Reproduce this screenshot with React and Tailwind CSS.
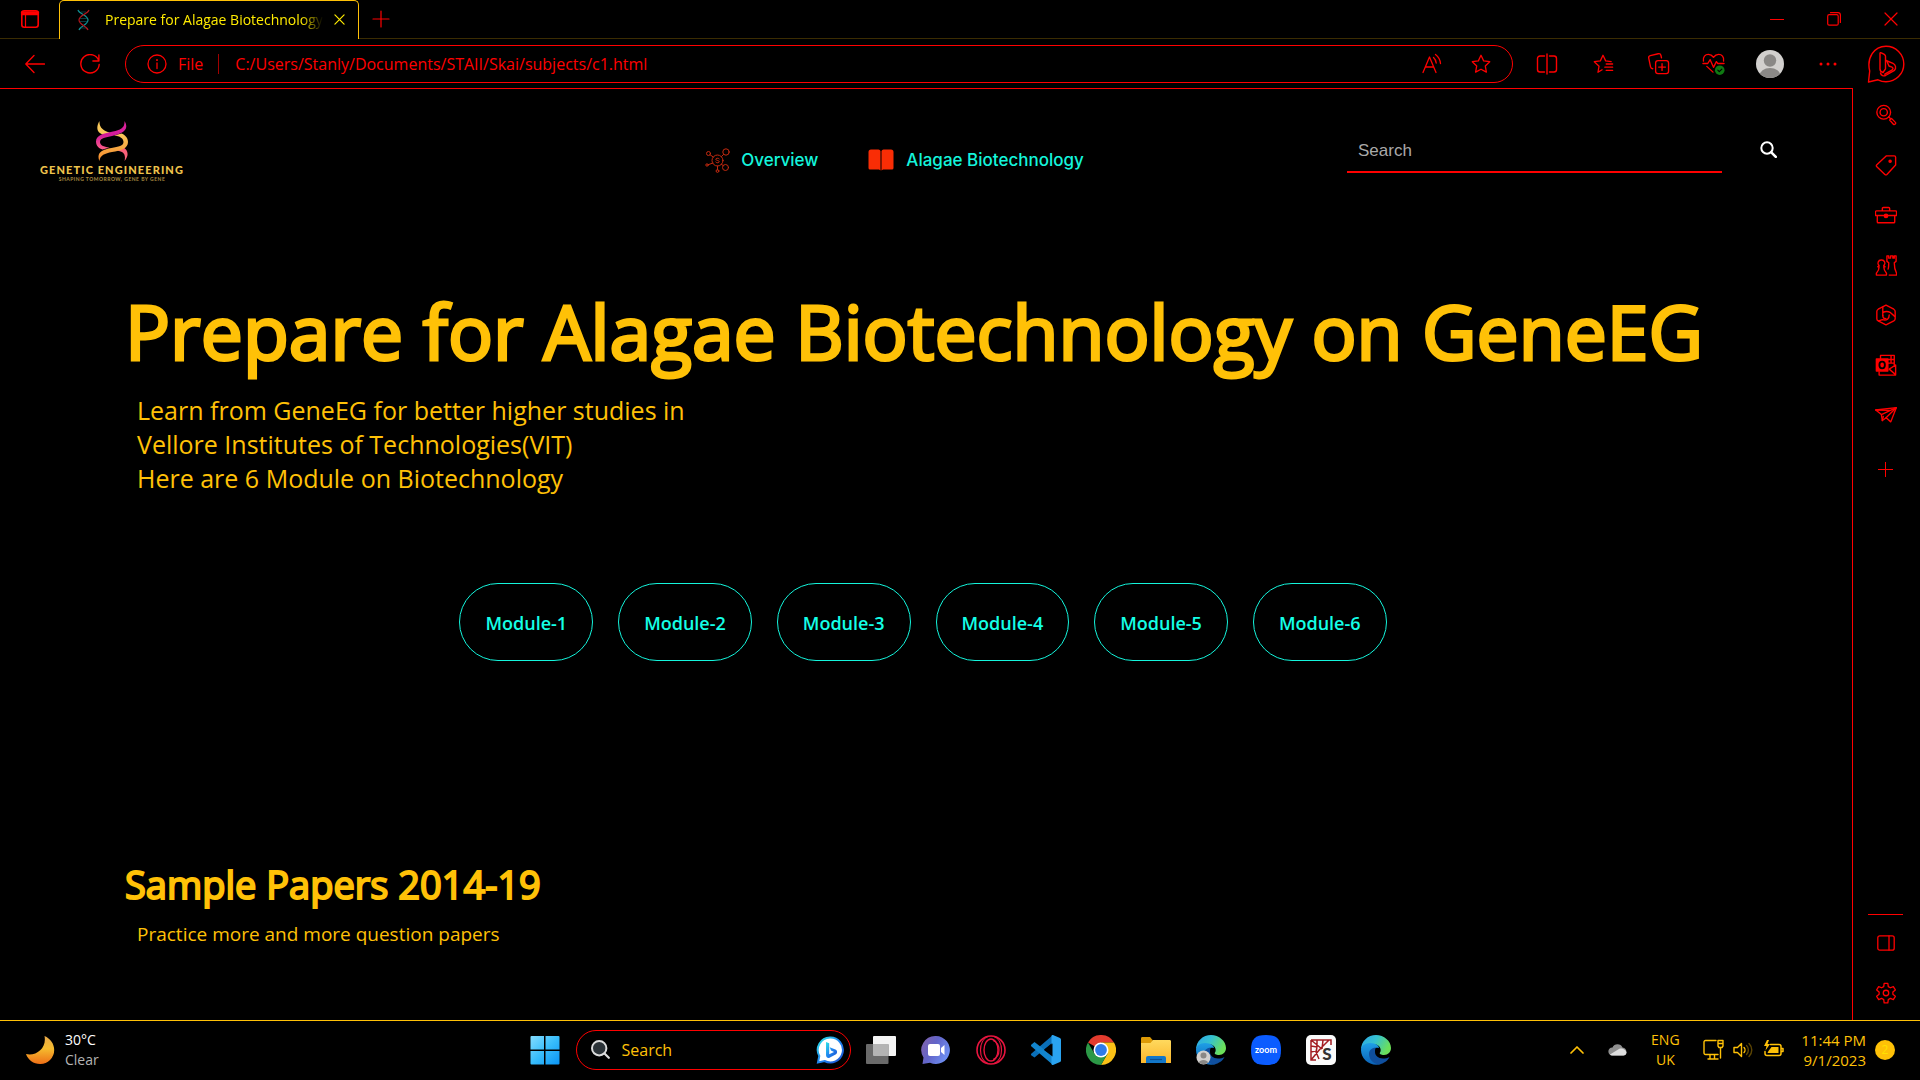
import React from "react";

function Line({ size = 20, box = 24, sw = 1.4, className = "", children }) {
  return (
    <svg
      width={size}
      height={size}
      viewBox={`0 0 ${box} ${box}`}
      fill="none"
      stroke="currentColor"
      strokeWidth={sw}
      strokeLinecap="round"
      strokeLinejoin="round"
      className={`shrink-0 ${className}`}
      aria-hidden="true"
    >
      {children}
    </svg>
  );
}

function IconButton({ label, className = "", children }) {
  return (
    <button type="button" aria-label={label} className={`flex shrink-0 items-center justify-center ${className}`}>
      {children}
    </button>
  );
}

/* ---------- window tab strip ---------- */

function TabStrip() {
  return (
    <div className="flex h-[39px] items-stretch">
      <div className="flex w-[59px] items-center border-b border-[#3b2c02] pl-[20px]">
        <IconButton label="Workspaces" className="h-[20px] w-[20px]">
          <Line size={20} box={20} sw={1.6}>
            <rect x="1.8" y="1.8" width="16.4" height="16.4" rx="2.5" />
            <path d="M2 3.5h16M2 5h16" strokeWidth="2.4" />
            <path d="M5.5 6v12" strokeWidth="1.2" />
          </Line>
        </IconButton>
      </div>
      <div className="flex w-[300px] items-center rounded-t-[5px] border border-b-0 border-[#ffc107] pr-[11px] pb-[1px] pl-[17px] text-[#ffeb00]">
        <svg width="13" height="22" viewBox="0 0 13 22" fill="none" strokeWidth="1.2" className="shrink-0" aria-hidden="true">
          <path d="M1 1c1 4 10 5 10 10S3 17 2 21" stroke="#0f8f93" />
          <path d="M12 1c-1 4-10 5-10 10s8 6 9 10" stroke="#b3161d" />
          <path d="M4 3h5M4 19h5M3 9.500h7M3 12.500h7" stroke="#0f5f66" strokeWidth="0.600" />
        </svg>
        <span className="ml-[15px] flex-1 overflow-hidden [mask-image:linear-gradient(to_right,black_90%,transparent)] text-[14px] whitespace-nowrap">
          Prepare for Alagae Biotechnology
        </span>
        <IconButton label="Close tab" className="ml-[8px] h-[16px] w-[16px]">
          <Line size={11} box={12} sw={1.3}>
            <path d="M1 1l10 10M11 1L1 11" />
          </Line>
        </IconButton>
      </div>
      <div className="flex flex-1 items-center justify-between border-b border-[#3b2c02] pr-[21px] pl-[12px]">
        <IconButton label="New tab" className="h-[20px] w-[20px]">
          <Line size={18} box={18} sw={1.2}>
            <path d="M9 1v16M1 9h16" />
          </Line>
        </IconButton>
        <div className="flex items-center gap-[41px]">
          <IconButton label="Minimise" className="h-[16px] w-[16px]">
            <Line size={14} box={14} sw={1}>
              <path d="M0 7.500h14" />
            </Line>
          </IconButton>
          <IconButton label="Restore" className="h-[16px] w-[16px]">
            <Line size={14} box={14} sw={1.200}>
              <rect x="0.700" y="2.700" width="10.500" height="10.500" rx="1.500" />
              <path d="M3.500 0.700h7.500a2.500 2.500 0 0 1 2.400 2.400V10.500" />
            </Line>
          </IconButton>
          <IconButton label="Close" className="h-[16px] w-[16px]">
            <Line size={14} box={14} sw={1.200}>
              <path d="M1 1l12 12M13 1L1 13" />
            </Line>
          </IconButton>
        </div>
      </div>
    </div>
  );
}

/* ---------- address bar row ---------- */

const STAR = "M12 2.500l2.900 6.100 6.600.9-4.800 4.700 1.200 6.700L12 17.700l-5.900 3.200 1.200-6.700L2.500 9.500l6.600-.9z";

function Toolbar() {
  return (
    <div className="flex h-[49px] items-center pr-[15px] pl-[25px]">
      <IconButton label="Back" className="h-[24px] w-[20px]">
        <Line size={20} box={20} sw={1.300}>
          <path d="M19.500 10H1M9 1.500L.8 10 9 18.500" />
        </Line>
      </IconButton>
      <IconButton label="Refresh" className="ml-[35px] h-[24px] w-[20px]">
        <Line size={20} box={20} sw={1.400}>
          <path d="M18.800 7A9.200 9.200 0 1 0 19.200 10.500M18.900 1v6h-6" />
        </Line>
      </IconButton>
      <div className="ml-[25px] flex h-[38px] flex-1 items-center rounded-full border border-[#ff0000] pr-[20px] pl-[21px]">
        <Line size={20} box={20} sw={1.300}>
          <circle cx="10" cy="10" r="9" />
          <path d="M10 9v5.500" />
          <path d="M10 6v.2" strokeWidth="1.800" />
        </Line>
        <span className="ml-[11px] text-[16px]">File</span>
        <span className="mr-[16px] ml-[15px] h-[20px] w-px shrink-0 bg-[#a00000]" />
        <input
          aria-label="Address"
          defaultValue="C:/Users/Stanly/Documents/STAII/Skai/subjects/c1.html"
          className="min-w-0 flex-1 bg-transparent text-[16px] outline-none"
        />
        <IconButton label="Read aloud" className="h-[22px] w-[22px]">
          <Line size={22} box={22} sw={1.300}>
            <path d="M2 19.500L8.500 4 15 19.500M4.300 14h8.400" />
            <path d="M12.500 4.500c1.600 1.500 2.500 3.500 2.700 5.500M14.500 1.500c3 2.300 4.700 5.500 5 9" />
          </Line>
        </IconButton>
        <IconButton label="Add to favourites" className="ml-[27px] h-[22px] w-[22px]">
          <Line size={22} sw={1.400}>
            <path d={STAR} />
          </Line>
        </IconButton>
      </div>
      <IconButton label="Split screen" className="ml-[23px] h-[22px] w-[22px]">
        <Line size={22} box={22} sw={1.400}>
          <path d="M8.500 3H4a2.500 2.500 0 0 0-2.500 2.500v11A2.500 2.500 0 0 0 4 19h4.500M13.500 3H18a2.500 2.500 0 0 1 2.500 2.500v11A2.500 2.500 0 0 1 18 19h-4.500M11 1v20" />
        </Line>
      </IconButton>
      <IconButton label="Favourites" className="ml-[34px] h-[22px] w-[22px]">
        <Line size={22} sw={1.400}>
          <path d="M11 18.300l-4.500 2.700 1.200-6.600L2.500 9.500l6.600-.9L12 2.500l2.900 6.100 6 .8" />
          <path d="M15.500 12h7M14 15.500h8.500M15.500 19h7" />
        </Line>
      </IconButton>
      <IconButton label="Collections" className="ml-[33px] h-[24px] w-[22px]">
        <Line size={23} sw={1.400}>
          <rect x="9" y="9" width="13.500" height="13.500" rx="2.500" />
          <path d="M15.700 12.200v7M12.200 15.700h7M6 17.500c-1.300-.2-2-.8-2.300-2L1.800 6.300C1.500 5 2.300 4 3.500 3.700l8.200-1.900c1.300-.3 2.500.4 2.800 1.600l.6 2.600" />
        </Line>
      </IconButton>
      <IconButton label="Browser essentials" className="ml-[33px] h-[24px] w-[22px]">
        <Line size={23} sw={1.400}>
          <path d="M1.500 9.500C.7 5 3.500 2.500 6.600 2.500c2.200 0 4 1.100 5.400 3 1.400-1.900 3.200-3 5.400-3 3.100 0 5.900 2.500 5.100 7M5 15l6.500 6" />
          <path d="M1 12h5l2.500-4 3.500 8 3-6 1.500 2H23" />
          <circle cx="18.500" cy="19" r="5" fill="#0f7a12" stroke="none" />
          <path d="M16.500 19l1.500 1.500 2.700-2.700" stroke="#000" strokeWidth="1.200" />
        </Line>
      </IconButton>
      <IconButton label="Profile" className="ml-[32px] h-[28px] w-[28px]">
        <svg width="28" height="28" viewBox="0 0 28 28" aria-hidden="true">
          <defs>
            <clipPath id="avatar">
              <circle cx="14" cy="14" r="14" />
            </clipPath>
          </defs>
          <g clipPath="url(#avatar)">
            <rect width="28" height="28" fill="#d2d0ce" />
            <circle cx="14" cy="10.500" r="6.200" fill="#8a8886" />
            <ellipse cx="14" cy="26" rx="10.500" ry="8" fill="#8a8886" />
          </g>
        </svg>
      </IconButton>
      <IconButton label="Settings and more" className="ml-[34px] h-[20px] w-[20px]">
        <svg width="18" height="4" viewBox="0 0 18 4" fill="currentColor" aria-hidden="true">
          <circle cx="2" cy="2" r="1.500" />
          <circle cx="9" cy="2" r="1.500" />
          <circle cx="16" cy="2" r="1.500" />
        </svg>
      </IconButton>
      <IconButton label="Bing chat" className="ml-[29px] h-[38px] w-[38px]">
        <Line size={38} box={38} sw={1.400}>
          <path d="M1.500 37l1.200-11C-.5 13 7 1.200 19 1.200A17.800 17.800 0 0 1 19 36.800c-3 0-5.500-.7-8-2z" />
          <path d="M13 8.500c0-.8.7-1 1.300-.7l3 1.500c.8.500 1.200 1 1.200 2v12.500l-2.500 3.700c-2-.5-3-1.700-3-3.500z" />
          <path d="M19 15.500l7 2.800c2.600 1.200 3.500 4.700 1.500 7l-9 5.200c-1.600.8-4.500.2-5-2.500M20 16.500l2 4.500 3 1.200c1.500.7 1.200 2-.2 3l-7 4" />
        </Line>
      </IconButton>
    </div>
  );
}

/* ---------- sidebar ---------- */

const SIDE_ITEMS = [
  {
    label: "Search",
    art: (
      <>
        <circle cx="9.500" cy="9" r="7.500" />
        <circle cx="9.500" cy="9" r="4" />
        <path d="M15 14l1.500 1.500M16 17.500l2-1.800 4.500 4.600c.6.800-1 2.800-2.200 2z" />
      </>
    ),
  },
  {
    label: "Shopping",
    art: (
      <>
        <path d="M12.500 2H21a1.500 1.500 0 0 1 1.500 1.500V12L13 22.300c-.7.700-1.500.7-2.200 0L2 14c-.7-.8-.7-1.600 0-2.300z" />
        <circle cx="16.500" cy="8" r="1.200" fill="currentColor" />
      </>
    ),
  },
  {
    label: "Tools",
    art: (
      <>
        <path d="M1.500 7.500h21c.6 0 1 .4 1 1v4h-23v-4c0-.6.400-1 1-1zM2.500 12.500v7c0 .6.400 1 1 1h17c.6 0 1-.4 1-1v-7M8 7.500V5c0-.8.400-1.200 1.200-1.200h5.600c.8 0 1.200.4 1.200 1.200v2.500" />
        <circle cx="12" cy="13" r="1.800" fill="currentColor" />
      </>
    ),
  },
  {
    label: "Games",
    art: (
      <>
        <path d="M7 6.500a3.500 3.500 0 0 1 2.500 6.200L11 14H9.500c0 3 1 4.500 3 7v2H1.500v-2c2.500-2.500 3-4 3-7H3l1.500-1.300A3.500 3.500 0 0 1 7 6.500z" />
        <path d="M13 2h2v2.500h2V2h2.500v2.500H21V2h2v6l-2 1.500c0 5 .5 7.500 2.500 11.500v2h-8M13 2v6l2 1.500c0 3 0 5-.7 7" />
      </>
    ),
  },
  {
    label: "Microsoft 365",
    art: (
      <>
        <path d="M12 1.200l8.500 4.500c1 .6 1.500 1.300 1.500 2.400v8c0 1-.5 1.800-1.500 2.400L12 22.800l-8.500-4.300C2.500 18 2 17.200 2 16.100v-8c0-1 .5-1.800 1.500-2.400z" />
        <path d="M8.500 3.500v9M8.500 9.500c3-2 6-1.500 8.500 0l4.500 4M4 18.500l4-1.500c5 1.500 7.500-1 7.500-5" />
        <path d="M8.500 12.500c0 2 1.500 3.500 3.500 3.500" />
      </>
    ),
  },
  {
    label: "Outlook",
    art: (
      <>
        <path d="M6 5V1.500h15V12M4.500 19.500V23H22.500V12l-7 4.500 7 6M14 6h7M14 10h7M17.500 2v8" />
        <rect x="1.500" y="5.500" width="12.500" height="13" fill="currentColor" />
        <ellipse cx="7.800" cy="12" rx="3" ry="3.600" stroke="#000" strokeWidth="2" />
      </>
    ),
  },
  {
    label: "Drop",
    art: (
      <>
        <path d="M.8 6.500L23.200 4l-6 15.500-5-4.500L8 18l-1-6.500z" />
        <path d="M7 11.500L23.200 4 12 15M8 18l1-4.500M.8 6.500L16 7" />
      </>
    ),
  },
];

function Sidebar() {
  return (
    <aside className="flex w-[67px] shrink-0 flex-col items-center pt-[15px] pr-[2px] pb-[15px]">
      {SIDE_ITEMS.map((item) => (
        <IconButton key={item.label} label={item.label} className="mb-[26px] h-[24px] w-[24px]">
          <Line size={22} sw={1.500}>{item.art}</Line>
        </IconButton>
      ))}
      <IconButton label="Customise" className="mt-[4px] h-[24px] w-[24px]">
        <Line size={15} box={15} sw={1}>
          <path d="M7.500 0v15M0 7.500h15" />
        </Line>
      </IconButton>
      <div className="mt-auto h-px w-[35px] bg-[#ff0000]" />
      <IconButton label="Hide sidebar" className="mt-[16px] h-[24px] w-[24px]">
        <Line size={18} box={18} sw={1.300}>
          <rect x="0.800" y="1.800" width="16.400" height="14.400" rx="2" />
          <path d="M12 2v14" />
        </Line>
      </IconButton>
      <IconButton label="Settings" className="mt-[26px] h-[24px] w-[24px]">
        <Line size={22} sw={1.400}>
          <path d="M9.500 5l.5-3.500h4l.5 3.500 2.300 1.300L20 5l2.200 3.600-2.700 2.200v2.600l2.700 2.200L20 19.200l-3.200-1.400-2.300 1.400-.5 3.500h-4l-.5-3.500-2.300-1.400L4 19.200l-2.200-3.600 2.700-2.200v-2.600L1.800 8.600 4 5l3.200 1.300z" />
          <circle cx="12" cy="12" r="3" />
        </Line>
      </IconButton>
    </aside>
  );
}

/* ---------- page ---------- */

function Logo() {
  return (
    <a href="#home" aria-label="Genetic Engineering home" className="flex w-[150px] flex-col items-center text-[#eec34c]">
      <svg width="32" height="40" viewBox="0 0 32 40" aria-hidden="true">
        <defs>
          <linearGradient id="dnaGold" x1="0" y1="0" x2="0" y2="1">
            <stop offset="0" stopColor="#f9c85a" />
            <stop offset="1" stopColor="#f58a2c" />
          </linearGradient>
          <linearGradient id="dnaPink" x1="0" y1="0" x2="0" y2="1">
            <stop offset="0" stopColor="#e0259c" />
            <stop offset="0.500" stopColor="#d21b9a" />
            <stop offset="1" stopColor="#ff5f86" />
          </linearGradient>
        </defs>
        <path d="M21 30c7 0 9 4 7.500 10 5-6 3.500-11-1.500-14z" fill="#f8607a" />
        <path d="M3.500 0C-.5 7 1 12 8 14l6-2.500C8 10 3 7 3.500 0z" fill="#f9c85a" />
        <path d="M18 14.500c6 .5 9.500 3 9.500 6.500 0 4-5 4.500-12 6C7 28.500 0 31 3.500 40 4 34 9 32.500 16 31c9-1.500 16-3.500 16-10 0-4.500-3-7-6.500-8.500z" fill="url(#dnaGold)" />
        <path d="M28.500 0c.5 7-4 9-11.500 10.500C8 12.500 0 14 0 20.500c0 4.500 3 7 6.500 8l7-2c-6-.5-9.500-2.500-9.500-5.500 0-4 6-4.500 12-6C26 13 34 9 28.500 0z" fill="url(#dnaPink)" />
      </svg>
      <span className="mt-[3px] font-['Lato'] text-[11px] leading-[12px] font-black tracking-widest whitespace-nowrap">GENETIC ENGINEERING</span>
      <span className="font-['Lato'] text-[5px] leading-[6px] font-bold tracking-widest whitespace-nowrap text-[#a98c40]">SHAPING TOMORROW, GENE BY GENE</span>
    </a>
  );
}

function PageHeader() {
  return (
    <header className="grid grid-cols-[1fr_auto_1fr] items-start pt-[32px] pr-[60px] pl-[37px]">
      <Logo />
      <nav className="-ml-[40px] flex items-center gap-[50px] pt-[26px] font-['Inter'] text-[17px] leading-[26px] font-medium text-[#14f5dc]">
        <a href="#overview" className="flex items-center gap-[11px]">
          <Line size={25} box={25} sw={1} className="text-[#c42a10]">
            <circle cx="12.500" cy="12.500" r="5.500" />
            <path d="M14.200 10.800c-.8-1-3.400-.8-3.400.5 0 1.500 3.400.8 3.400 2.400 0 1.300-2.600 1.500-3.400.4" />
            <circle cx="21" cy="4" r="3.200" />
            <circle cx="3.500" cy="5.500" r="2" />
            <circle cx="20.500" cy="19.500" r="3" />
            <circle cx="12.500" cy="23" r="1.400" />
            <circle cx="2" cy="17" r="1.200" />
            <path d="M16.500 8.500l2-2M8.300 9L5 6.800M16.500 16.500l1.800 1M12.500 18v4M8 15l-4.800 1.700" />
          </Line>
          Overview
        </a>
        <a href="#alagae" className="flex items-center gap-[12px]">
          <svg width="26" height="22" viewBox="0 0 26 22" fill="#f92d05" className="shrink-0" aria-hidden="true">
            <path d="M3 .5h7.500A2.200 2.200 0 0 1 12.500 2v19.500L11 20.500H2A1.500 1.500 0 0 1 .5 19V3A2.500 2.500 0 0 1 3 .5zM23 .5h-7.500A2.200 2.200 0 0 0 13.500 2v19.500l1.500-1h9a1.500 1.500 0 0 0 1.500-1.500V3A2.500 2.500 0 0 0 23 .5z" />
          </svg>
          Alagae Biotechnology
        </a>
      </nav>
      <form className="flex items-center justify-end pt-[6px]" onSubmit={(e) => e.preventDefault()}>
        <input
          aria-label="Search"
          placeholder="Search"
          className="h-[46px] w-full max-w-[375px] border-b-2 border-[#ff0000] bg-transparent pt-[4px] pr-[11px] pl-[11px] font-['Liberation_Sans'] text-[17px] text-white outline-none placeholder:text-[#a9a9a9]"
        />
        <IconButton label="Submit search" className="mr-[15px] mb-[2px] ml-[37px] h-[18px] w-[18px] text-white">
          <Line size={17} box={17} sw={2}>
            <circle cx="7" cy="7" r="5.700" />
            <path d="M11.300 11.300l4.500 4.500" strokeWidth="2.600" />
          </Line>
        </IconButton>
      </form>
    </header>
  );
}

const MODULES = ["Module-1", "Module-2", "Module-3", "Module-4", "Module-5", "Module-6"];

function Page() {
  return (
    <main className="min-w-0 flex-1 border-t border-r border-[#ff0000] font-['Open_Sans'] text-[#ffc107]">
      <PageHeader />
      <h1 className="mt-[94px] ml-[125px] text-[75px] leading-[110px] [-webkit-text-stroke:3px_#ffc107]">
        Prepare for Alagae Biotechnology on GeneEG
      </h1>
      <p className="mt-[7px] ml-[137px] max-w-[600px] text-[25px] leading-[34px]">
        Learn from GeneEG for better higher studies in
        <br />
        Vellore Institutes of Technologies(VIT)
        <br />
        Here are 6 Module on Biotechnology
      </p>
      <div className="mt-[88px] flex justify-center gap-[25px] pr-[6px]">
        {MODULES.map((name) => (
          <button
            key={name}
            type="button"
            className="h-[78px] rounded-full border border-[#14f5dc] px-[25px] pt-[2px] font-['Comic_Sans_MS','Open_Sans'] text-[18px] font-semibold text-[#14ffe6]"
          >
            {name}
          </button>
        ))}
      </div>
      <h2 className="mt-[196px] ml-[125px] text-[38px] leading-[54px] [-webkit-text-stroke:2px_#ffc107]">Sample Papers 2014-19</h2>
      <p className="mt-[10px] ml-[137px] text-[19px] leading-[26px]">Practice more and more question papers</p>
    </main>
  );
}

/* ---------- taskbar ---------- */

function EdgeArt({ id, person }) {
  return (
    <svg width="30" height="30" viewBox="0 0 30 30" aria-hidden="true">
      <defs>
        <linearGradient id={`${id}top`} x1="0" y1="0" x2="1" y2="0.400">
          <stop offset="0" stopColor="#2aa5e8" />
          <stop offset="0.500" stopColor="#35c1d0" />
          <stop offset="1" stopColor="#6be05a" />
        </linearGradient>
        <linearGradient id={`${id}side`} x1="0" y1="0" x2="0" y2="1">
          <stop offset="0" stopColor="#1f9fe6" />
          <stop offset="1" stopColor="#0b63b8" />
        </linearGradient>
      </defs>
      <path d="M0 15C0 6 7 0 15 0s15 6 15 13c0 4-3 7-7 7-3 0-5-1-4-2.500C21 15 19 9 12 9 6 9 1 11 0 15z" fill={`url(#${id}top)`} />
      <path d="M0 15c0-4 4-7 9-7 6 0 9 3 9 5-4-1-7 2-7 6s3 9 9 10C10 32 0 25 0 15z" fill={`url(#${id}side)`} />
      <path d="M15 12.500C10 13 8 16 8 19c0 5 4 10 10 10.500 5-1 9-4 10.500-7.500-2 1-4 1.500-6.500 1.500-5 0-8-3-8-6.500 0-2 0-3.500 1-4.500z" fill="#0f4f9e" />
      {person && (
        <>
          <circle cx="7.500" cy="22.500" r="7" fill="#d2d0ce" />
          <circle cx="7.500" cy="20.500" r="3" fill="#8a8886" />
          <path d="M2.800 27.500c1-3.500 8.400-3.500 9.400 0a7 7 0 0 1-9.400 0z" fill="#8a8886" />
        </>
      )}
    </svg>
  );
}

const APPS = [
  {
    name: "Task view",
    art: (
      <svg width="30" height="30" viewBox="0 0 30 30" aria-hidden="true">
        <rect x="7" y="1" width="23" height="20" rx="1" fill="#f4f4f4" />
        <rect x="0" y="9" width="22.500" height="20" rx="1" fill="#6a6a6a" />
        <path d="M7 9h15.500v12H8a1 1 0 0 1-1-1z" fill="#b4b4b4" />
      </svg>
    ),
  },
  {
    name: "Chat",
    art: (
      <svg width="30" height="30" viewBox="0 0 30 30" aria-hidden="true">
        <defs>
          <linearGradient id="chat" x1="0" y1="0" x2="1" y2="0.500">
            <stop offset="0" stopColor="#8661a8" />
            <stop offset="0.500" stopColor="#6264c8" />
            <stop offset="1" stopColor="#6d8df0" />
          </linearGradient>
        </defs>
        <path d="M15 1a14 14 0 1 1-6 26.700L1.500 29l1-6.500A14 14 0 0 1 15 1z" fill="url(#chat)" />
        <rect x="7" y="9" width="12" height="12" rx="2" fill="#fff" />
        <path d="M20 13l3.500-3v10L20 17z" fill="#fff" />
      </svg>
    ),
  },
  {
    name: "Opera GX",
    art: (
      <svg width="30" height="30" viewBox="0 0 30 30" fill="none" stroke="#e8153f" aria-hidden="true">
        <circle cx="15" cy="15" r="14" strokeWidth="1.600" />
        <ellipse cx="15" cy="15" rx="7" ry="11" strokeWidth="1.400" />
        <path d="M12 1.500C2 5 2 25 12 28.500M17 5.500c8 3 8 16 0 19M18 1.500c10 3.500 10 23.500 0 27" strokeWidth="1.200" />
      </svg>
    ),
  },
  {
    name: "Visual Studio Code",
    art: (
      <svg width="30" height="30" viewBox="0 0 30 30" aria-hidden="true">
        <path d="M22 0l-1 8L3.500 22.500 0.500 20.500c-.7-.6-.7-1.400 0-2z" fill="#0a6fb8" />
        <path d="M.5 9.500L3.500 7 22 21.500V30L.5 11.500c-.7-.6-.7-1.400 0-2z" fill="#1284cc" />
        <path d="M22 0l7 3a2 2 0 0 1 1 1.800v20.400a2 2 0 0 1-1 1.800l-7 3c-1 0-1.500-.5-1.500-1V1c0-.5.5-1 1.500-1z" fill="#2aa3f0" />
        <path d="M21.500 8.500v13L13 15z" fill="#000" />
      </svg>
    ),
  },
  {
    name: "Google Chrome",
    art: (
      <svg width="30" height="30" viewBox="0 0 30 30" aria-hidden="true">
        <path d="M15 15L2 7.500A15 15 0 0 1 28 7.500H15z" fill="#e33b2e" />
        <path d="M28 7.500A15 15 0 0 1 15 30l6.500-11.200L19 9l-4-1.500z" fill="#fbc116" />
        <path d="M2 7.500A15 15 0 0 0 15 30l6.500-11.200-6.500 3.500-6.500-3.500z" fill="#2b9846" />
        <circle cx="15" cy="15" r="7.500" fill="#fff" />
        <circle cx="15" cy="15" r="5.900" fill="#2f7be8" />
      </svg>
    ),
  },
  {
    name: "File Explorer",
    art: (
      <svg width="30" height="30" viewBox="0 0 30 30" aria-hidden="true">
        <defs>
          <linearGradient id="folder" x1="0" y1="0" x2="0" y2="1">
            <stop offset="0" stopColor="#ffd95e" />
            <stop offset="1" stopColor="#fbb62b" />
          </linearGradient>
        </defs>
        <path d="M0 3.500C0 2.500.5 2 1.500 2H9l3 3.500V10H0z" fill="#dd9a06" />
        <path d="M0 8h9.500L12 5h16.500c1 0 1.500.5 1.500 1.500V28H0z" fill="url(#folder)" />
        <path d="M5 28v-5a2 2 0 0 1 2-2h16a2 2 0 0 1 2 2v5z" fill="#1277c9" />
        <path d="M9 24.500h12" stroke="#0b4f92" strokeWidth="1.200" />
      </svg>
    ),
  },
  { name: "Edge work profile", art: <EdgeArt id="edgeA" person /> },
  {
    name: "Zoom",
    art: (
      <svg width="30" height="30" viewBox="0 0 30 30" aria-hidden="true">
        <path d="M15 0c11 0 15 4 15 15s-4 15-15 15S0 26 0 15 4 0 15 0z" fill="#0b5cff" />
        <text x="15" y="17.500" textAnchor="middle" fontFamily="Lato" fontWeight="700" fontSize="9" fill="#fff">
          zoom
        </text>
      </svg>
    ),
  },
  {
    name: "Spyder",
    art: (
      <svg width="30" height="30" viewBox="0 0 30 30" fill="none" aria-hidden="true">
        <rect width="30" height="30" rx="5" fill="#fafafa" />
        <path d="M5 5h20v5M5 5v20h5M5 25l9-11M14 14l9-9M5 5l11 9M11 5v4.500M17 5l-1 9M5 11l6 1M5 17l6-1.500M11 9c0 3 0 5-1 8l3 7" stroke="#a31d22" strokeWidth="1.500" />
        <text x="21" y="25" textAnchor="middle" fontFamily="Lato" fontWeight="900" fontSize="17" fill="#333">
          S
        </text>
      </svg>
    ),
  },
  { name: "Microsoft Edge", art: <EdgeArt id="edgeB" /> },
];

function Taskbar() {
  return (
    <footer className="grid h-[60px] shrink-0 grid-cols-[1fr_auto_1fr] items-center border-t border-[#ffc107] pb-[2px] text-[#ffc107]">
      <button type="button" className="flex items-center gap-[10px] pl-[26px] text-left">
        <svg width="29" height="28" viewBox="0 0 29 28" className="shrink-0" aria-hidden="true">
          <defs>
            <linearGradient id="moon" x1="0" y1="0" x2="0" y2="1">
              <stop offset="0" stopColor="#e8a94a" />
              <stop offset="0.450" stopColor="#f5bb2e" />
              <stop offset="1" stopColor="#ee6f17" />
            </linearGradient>
          </defs>
          <path d="M18.500 0c6 2.500 9.700 8 9.700 14A14 14 0 0 1 14 28C7.500 28 2 24 0 18c10 2.500 21-6 18.500-18z" fill="url(#moon)" />
        </svg>
        <span className="flex flex-col text-[14px] leading-[20px]">
          <span className="text-white">30°C</span>
          <span className="text-[#b4b4b4]">Clear</span>
        </span>
      </button>
      <div className="flex items-center">
        <IconButton label="Start" className="h-[30px] w-[30px]">
          <svg width="30" height="30" viewBox="0 0 30 30" aria-hidden="true">
            <defs>
              <linearGradient id="win" x1="0" y1="0" x2="1" y2="1">
                <stop offset="0" stopColor="#84dcff" />
                <stop offset="0.500" stopColor="#38bdfb" />
                <stop offset="1" stopColor="#0a94f5" />
              </linearGradient>
            </defs>
            <path d="M1.500 1H14v13.500H.5V2a1 1 0 0 1 1-1zM15.500 1h13a1 1 0 0 1 1 1v12.500h-14zM.5 16H14v13.500H1.500a1 1 0 0 1-1-1zM15.500 16h14v12.500a1 1 0 0 1-1 1h-13z" fill="url(#win)" />
          </svg>
        </IconButton>
        <div className="mr-[15px] ml-[16px] flex h-[40px] w-[275px] items-center rounded-full border border-[#ff0000] pr-[6px] pl-[14px]">
          <svg width="19" height="19" viewBox="0 0 19 19" fill="none" stroke="#dcdcdc" strokeLinecap="round" className="shrink-0" aria-hidden="true">
            <circle cx="8.200" cy="8.200" r="7.200" strokeWidth="2" fill="#2c3338" />
            <path d="M13.500 13.500l4.300 4.300" strokeWidth="2.200" />
          </svg>
          <input
            aria-label="Search"
            placeholder="Search"
            className="ml-[12px] min-w-0 flex-1 bg-transparent text-[16px] outline-none placeholder:text-[#ffc107]"
          />
          <svg width="28" height="28" viewBox="0 0 28 28" className="shrink-0" aria-hidden="true">
            <defs>
              <linearGradient id="bing" x1="0" y1="0" x2="1" y2="1">
                <stop offset="0" stopColor="#2ee6e6" />
                <stop offset="0.500" stopColor="#2187f0" />
                <stop offset="1" stopColor="#1b4fd0" />
              </linearGradient>
            </defs>
            <path d="M14 1.500a12.500 12.500 0 1 1-5.500 23.500L2 26.500l1.300-6.500A12.500 12.500 0 0 1 14 1.500z" fill="#fff" stroke="url(#bing)" strokeWidth="2" />
            <path d="M10 6l3.200 1.300v11L18 16l-3-1.500-1.300-3.300 6.300 2.500c1.500 1 1.500 3.500 0 4.500l-6.500 3.600C12 22.500 10 21.500 10 19z" fill="url(#bing)" />
          </svg>
        </div>
        <div className="flex items-center gap-[25px]">
          {APPS.map((app) => (
            <IconButton key={app.name} label={app.name} className="h-[30px] w-[30px]">
              {app.art}
            </IconButton>
          ))}
        </div>
      </div>
      <div className="flex items-center justify-end pr-[25px] leading-[20px]">
        <IconButton label="Show hidden icons" className="h-[20px] w-[20px]">
          <Line size={14} box={14} sw={1.700}>
            <path d="M1 10l6-6 6 6" />
          </Line>
        </IconButton>
        <IconButton label="OneDrive" className="ml-[20px] h-[20px] w-[20px]">
          <svg width="19" height="13" viewBox="0 0 19 13" aria-hidden="true">
            <path d="M4.500 4.500A5.500 5.500 0 0 1 14.500 4.500c5 0 5 8 1 8h-11c-5.500 0-5.500-8 0-8z" fill="#8f8f8f" />
            <path d="M2 11.500l9-5.500c3-1.500 7 1 7.500 3.500 0 2-1.500 3-3 3h-11c-1 0-2-.3-2.500-1z" fill="#dedede" />
          </svg>
        </IconButton>
        <button type="button" className="ml-[23px] flex w-[30px] flex-col items-center text-[14px]">
          <span>ENG</span>
          <span>UK</span>
        </button>
        <IconButton label="Network" className="ml-[22px] h-[22px] w-[22px]">
          <Line size={21} box={21} sw={1.400}>
            <path d="M13 1.500H2.500a1.500 1.500 0 0 0-1.500 1.500v11a1.500 1.500 0 0 0 1.500 1.500H15M5 20h10M7 16v4M11.500 16v4" />
            <path d="M15 1.500h5v5.500l-1 1.500h-3L15 7zM15 4.500h5M17.500 8.500V19" />
          </Line>
        </IconButton>
        <IconButton label="Volume" className="ml-[8px] h-[22px] w-[22px]">
          <Line size={20} box={20} sw={1.400}>
            <path d="M1 7.500h3.500L8.500 3.500v13L4.500 12.500H1zM11 7.500c1.300 1.300 1.300 3.700 0 5" />
            <path d="M13.500 5.500c2.500 2.500 2.500 6.500 0 9M16 3.500c3.700 3.700 3.700 9.300 0 13" stroke="#5c4503" />
          </Line>
        </IconButton>
        <IconButton label="Battery" className="ml-[8px] h-[22px] w-[22px]">
          <Line size={21} box={21} sw={1.500}>
            <path d="M7.500 5.500H16a2 2 0 0 1 2 2v7a2 2 0 0 1-2 2H4a2 2 0 0 1-2-2v-2M18.500 9.500h1.500v3h-1.500" />
            <path d="M8.500 8h7v6h-11l1-2z" fill="currentColor" stroke="none" />
            <path d="M4 1L1 7h2.500l-1 4.500L7 5H4.500L6 1z" fill="currentColor" stroke="none" />
          </Line>
        </IconButton>
        <button type="button" className="ml-[17px] flex flex-col items-end text-[15px] whitespace-nowrap">
          <span>11:44 PM</span>
          <span>9/1/2023</span>
        </button>
        <span className="ml-[9px] flex h-[20px] w-[20px] items-center justify-center rounded-full bg-[#ffc107] text-[12px] text-[#ffe000]">2</span>
      </div>
    </footer>
  );
}

export default function App() {
  return (
    <div className="flex min-h-screen flex-col bg-black font-['Open_Sans',sans-serif] text-[#ff0000]">
      <TabStrip />
      <Toolbar />
      <div className="flex flex-1 items-stretch">
        <Page />
        <Sidebar />
      </div>
      <Taskbar />
    </div>
  );
}
